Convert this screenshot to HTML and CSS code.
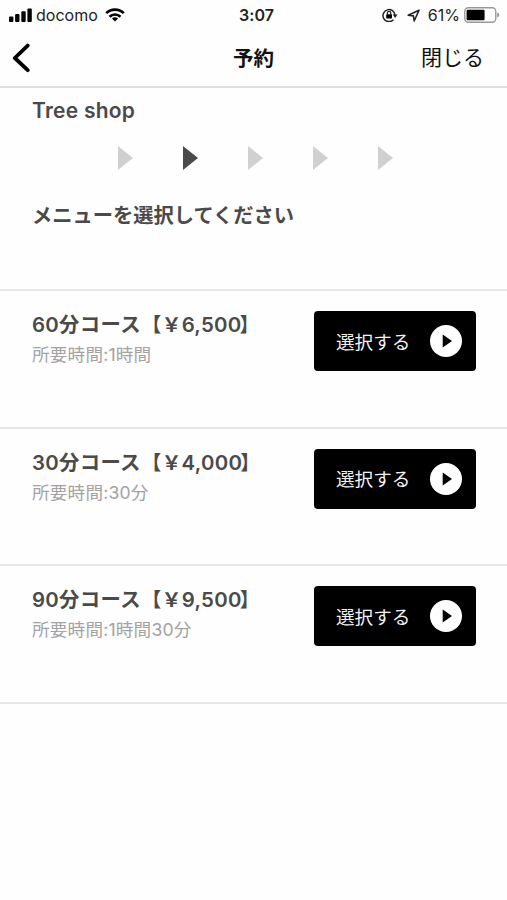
FILE: index.html
```html
<!DOCTYPE html>
<html lang="ja">

<head>
    <meta charset="UTF-8">
    <meta name="viewport" content="width=device-width, initial-scale=1.0">
    <title>予約</title>
    <link rel="stylesheet" href="styles.css">
</head>

<body>
    <!-- ステータスバー -->
    <div class="status">
        <div class="status_left">
            <svg class="signal" width="24" height="14" viewBox="0 0 24 14">
                <rect x="0" y="8.5" width="4.4" height="5.5" rx="1" />
                <rect x="6.1" y="6" width="4.4" height="8" rx="1" />
                <rect x="12.3" y="3.3" width="4.4" height="10.7" rx="1" />
                <rect x="18.4" y="0.5" width="4.4" height="13.5" rx="1" />
            </svg>
            <span class="carrier">docomo</span>
            <svg class="wifi" width="20" height="14" viewBox="0 0 20 14">
                <path d="M1.2 5.2A12.5 12.5 0 0 1 18.8 5.2" />
                <path d="M4.5 8.7A7.9 7.9 0 0 1 15.5 8.7" />
                <path class="fill" d="M6.9 10.6A4.5 4.5 0 0 1 13.1 10.6L10 13.6Z" />
            </svg>
        </div>
        <div class="status_time">3:07</div>
        <div class="status_right">
            <svg class="lock" width="16" height="14" viewBox="0 0 16 14">
                <path d="M11.4 11.7A6 6 0 1 1 13 7.4" />
                <path class="fill" d="M10.7 6.6H15.5L13.1 10Z" />
                <rect x="4.2" y="6.3" width="5.8" height="4.1" rx="0.6" />
                <path class="shackle" d="M5.4 6.5V5.1A1.7 1.7 0 0 1 8.8 5.1V6.5" />
            </svg>
            <svg class="arrow" width="13" height="13" viewBox="0 0 13 13">
                <path d="M1.2 6.2L12 1.2L7.2 12L6.4 6.9Z" />
            </svg>
            <span class="percent">61%</span>
            <svg class="battery" width="37" height="16" viewBox="0 0 37 16">
                <rect class="frame" x="0.8" y="0.8" width="31" height="14.4" rx="3.6" />
                <rect x="2.6" y="2.7" width="18" height="10.6" rx="1.2" />
                <path class="cap" d="M33.2 5.4Q35.4 6.2 35.4 8T33.2 10.6Z" />
            </svg>
        </div>
    </div>

    <!-- ナビゲーション -->
    <div class="nav">
        <a class="nav_back" href="javascript:;">
            <svg width="18" height="30" viewBox="0 0 18 30">
                <path d="M15.7 2.6L2.8 15L15.7 27.2" />
            </svg>
        </a>
        <div class="nav_title">予約</div>
        <a class="nav_close" href="javascript:;">閉じる</a>
    </div>

    <div class="intro">
        <h1 class="shop">Tree shop</h1>
        <div class="steps">
            <span class="step"></span>
            <span class="step active"></span>
            <span class="step"></span>
            <span class="step"></span>
            <span class="step"></span>
        </div>
        <p class="guide">メニューを選択してください</p>
    </div>

    <!-- メニュー一覧 -->
    <ul class="menu">
        <li class="menu_item">
            <div class="menu_text">
                <h2>60分コース<span class="mark">【￥</span>6,500<span class="mark end">】</span></h2>
                <p>所要時間:1時間</p>
            </div>
            <a class="btn" href="javascript:;">
                <span>選択する</span>
                <svg width="32" height="32" viewBox="0 0 32 32">
                    <circle cx="16" cy="16" r="16" />
                    <path d="M12.7 9.6L22 16L12.7 22.6Z" />
                </svg>
            </a>
        </li>
        <li class="menu_item">
            <div class="menu_text">
                <h2>30分コース<span class="mark">【￥</span>4,000<span class="mark end">】</span></h2>
                <p>所要時間:30分</p>
            </div>
            <a class="btn" href="javascript:;">
                <span>選択する</span>
                <svg width="32" height="32" viewBox="0 0 32 32">
                    <circle cx="16" cy="16" r="16" />
                    <path d="M12.7 9.6L22 16L12.7 22.6Z" />
                </svg>
            </a>
        </li>
        <li class="menu_item">
            <div class="menu_text">
                <h2>90分コース<span class="mark">【￥</span>9,500<span class="mark end">】</span></h2>
                <p>所要時間:1時間30分</p>
            </div>
            <a class="btn" href="javascript:;">
                <span>選択する</span>
                <svg width="32" height="32" viewBox="0 0 32 32">
                    <circle cx="16" cy="16" r="16" />
                    <path d="M12.7 9.6L22 16L12.7 22.6Z" />
                </svg>
            </a>
        </li>
    </ul>
</body>

</html>
```
FILE: styles.css
```css
* {
    margin: 0;
    padding: 0;
    box-sizing: border-box;
}

body {
    background-color: #fefefe;
    color: #4a4a4a;
    font-family: Inter, "Noto Sans CJK JP", sans-serif;
}

a {
    color: #111;
    text-decoration: none;
}

ul {
    list-style: none;
}

svg {
    display: block;
    flex: none;
}

/* ステータスバー */
.status {
    display: grid;
    grid-template-columns: 1fr auto 1fr;
    align-items: center;
    height: 30px;
    padding: 0 6px 0 9px;
    font-size: 16px;
    line-height: 30px;
    color: #222;
}

.status_left,
.status_right {
    display: flex;
    align-items: center;
}

.status_right {
    justify-content: flex-end;
}

.carrier {
    margin-left: 3px;
}

.wifi {
    margin-left: 7px;
}

.wifi path {
    fill: none;
    stroke: #000;
    stroke-width: 2.6;
}

.wifi .fill {
    fill: #000;
    stroke: none;
}

.status_time {
    padding-left: 3px;
    font-weight: 600;
    letter-spacing: 0.1px;
}

.lock path {
    fill: none;
    stroke: #222;
    stroke-width: 1.5;
}

.lock .fill {
    fill: #222;
    stroke: none;
}

.lock .shackle {
    stroke-width: 1.2;
}

.arrow {
    margin-left: 9px;
}

.arrow path {
    fill: none;
    stroke: #222;
    stroke-width: 1.6;
    stroke-linejoin: round;
}

.percent {
    margin-left: 8px;
}

.battery {
    margin-left: 4px;
}

.battery .frame {
    fill: none;
    stroke: #999;
    stroke-width: 1.4;
}

.battery .cap {
    fill: #999;
}

/* ナビゲーション */
.nav {
    display: grid;
    grid-template-columns: 1fr auto 1fr;
    align-items: center;
    height: 58px;
    padding: 0 23px 1px 12px;
    border-bottom: 2px solid #dedede;
}

.nav_back path {
    fill: none;
    stroke: #000;
    stroke-width: 3.8;
    stroke-linecap: round;
    stroke-linejoin: round;
}

.nav_title {
    padding: 2px 0 0 11px;
    color: #111;
    font-size: 20.5px;
    font-weight: 600;
    line-height: 30px;
}

.nav_close {
    padding-top: 1px;
    text-align: right;
    font-size: 21px;
    line-height: 30px;
}

.intro {
    height: 201px;
    padding: 9px 32px 0;
}

.shop {
    font-size: 21px;
    font-weight: 600;
    line-height: 28px;
    letter-spacing: 0.25px;
}

.steps {
    display: flex;
    justify-content: center;
    gap: 50px;
    margin-top: 21px;
    padding-left: 4px;
}

.step {
    border-left: 15px solid #d0d0d0;
    border-top: 12.5px solid transparent;
    border-bottom: 12.5px solid transparent;
}

.step.active {
    border-left-color: #4a4a4a;
}

.guide {
    margin-top: 30px;
    font-size: 20.25px;
    font-weight: 600;
    line-height: 32px;
}

/* メニュー一覧 */
.menu {
    border-bottom: 2px solid #e6e6e6;
}

.menu_item {
    display: flex;
    justify-content: space-between;
    align-items: flex-start;
    height: 137.5px;
    padding: 20px 31px 0 32px;
    border-top: 2px solid #e6e6e6;
}

.menu_text h2 {
    font-size: 20.4px;
    font-weight: 600;
    line-height: 28px;
    letter-spacing: 0.3px;
    white-space: nowrap;
}

/* 括弧と円記号は全角の字形で表示 */
.menu_text .mark {
    margin-left: 1px;
    font-family: "Noto Sans CJK JP", sans-serif;
    font-size: 19.6px;
    line-height: 1;
}

.menu_text .end {
    margin-left: -2px;
}

.menu_text p {
    color: #a3a3a3;
    font-size: 17.6px;
    line-height: 32px;
    letter-spacing: 0.2px;
}

.btn {
    display: flex;
    justify-content: space-between;
    align-items: center;
    width: 162px;
    height: 60px;
    padding: 0 14px 0 22px;
    border-radius: 4px;
    background-color: #000;
    color: #f2f2f2;
    font-size: 18.6px;
}

.btn span {
    padding-bottom: 2px;
}

.btn circle {
    fill: #fff;
}

.btn path {
    fill: #000;
}
```
